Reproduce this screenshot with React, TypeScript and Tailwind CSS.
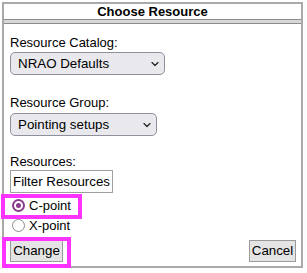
import { useState } from "react";

function Chevron() {
  return (
    <svg
      className="pointer-events-none absolute right-[6px] top-1/2 -translate-y-1/2"
      width="8"
      height="5"
      viewBox="0 0 8 5"
      fill="none"
    >
      <path d="M1 1l3 3 3-3" stroke="#222" strokeWidth="1.2" strokeLinecap="round" strokeLinejoin="round" />
    </svg>
  );
}

function Picker({ value, width }: { value: string; width: string }) {
  return (
    <div className={`relative mt-[2px] h-[23px] ${width}`}>
      <select
        defaultValue={value}
        className="h-full w-full appearance-none rounded-[5px] border border-[#8f8f9d] bg-[#e9e9ed] pl-[7px] text-[13.33px] leading-[21px] text-black outline-none"
      >
        <option>{value}</option>
      </select>
      <Chevron />
    </div>
  );
}

function Radio({ label, checked, onPick }: { label: string; checked: boolean; onPick: () => void }) {
  return (
    <label className="flex h-[18px] cursor-pointer items-center" onClick={onPick}>
      {checked ? (
        <span className="ml-[2px] flex h-[13px] w-[13px] items-center justify-center rounded-full border-2 border-[#8a3b8d] bg-white">
          <span className="h-[5px] w-[5px] rounded-full bg-[#8a3b8d]" />
        </span>
      ) : (
        <span className="ml-[2px] h-[13px] w-[13px] rounded-full border border-[#8d8d8d] bg-white" />
      )}
      <span className="ml-[4px] leading-[15px]">{label}</span>
    </label>
  );
}

export default function App() {
  const [pick, setPick] = useState("C-point");

  return (
    <div className="relative h-[273px] w-[307px] bg-white font-['Liberation_Sans',Arial,sans-serif] text-[13px] text-black">
      <div className="ml-[2px] mt-[2px] flex w-[301px] flex-col border-2 border-[#a9a9a9]">
        <div className="h-[15px] text-center font-bold leading-[15px]">Choose Resource</div>
        <div className="h-[5px] border-y border-[#8c8c8c] bg-[#d8d8d8]" />

        <div className="flex flex-col pb-[4px] pl-[6px] pr-[5px]">
          <div className="mt-[11px] leading-[15px]">Resource Catalog:</div>
          <Picker value="NRAO Defaults" width="w-[155px]" />

          <div className="mt-[20px] leading-[15px]">Resource Group:</div>
          <div className="mt-[1px]">
            <Picker value="Pointing setups" width="w-[147px]" />
          </div>

          <div className="mt-[18px] leading-[15px]">Resources:</div>
          <button className="mt-[1px] h-[23px] w-[103px] border border-[#a0a0a0] bg-white pl-[2px] text-left text-[13.33px]">
            Filter Resources
          </button>

          <div className="mt-[3px]">
            <Radio label="C-point" checked={pick === "C-point"} onPick={() => setPick("C-point")} />
          </div>
          <div className="mt-[2px]">
            <Radio label="X-point" checked={pick === "X-point"} onPick={() => setPick("X-point")} />
          </div>

          <div className="mt-[6px] flex items-center justify-between">
            <button className="h-[22px] w-[53px] border border-[#9a9a9a] bg-[#e4e4e4] text-[13.33px]">Change</button>
            <button className="h-[22px] w-[47px] border border-[#9a9a9a] bg-[#e4e4e4] text-[13.33px]">Cancel</button>
          </div>
        </div>
      </div>

      {/* highlight annotations */}
      <div className="pointer-events-none absolute left-[1px] top-[192px] h-[25px] w-[81px] border-4 border-[#ff33ff]" />
      <div className="pointer-events-none absolute left-[2px] top-[235px] h-[31px] w-[69px] border-4 border-[#ff33ff]" />
    </div>
  );
}
